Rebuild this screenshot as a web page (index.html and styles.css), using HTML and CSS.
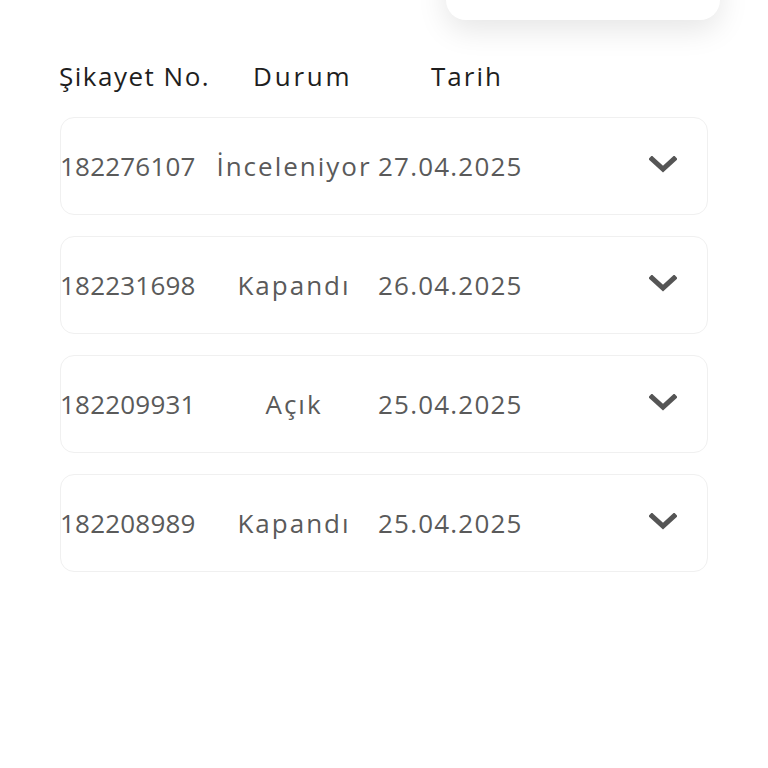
FILE: index.html
```html
<!DOCTYPE html>
<html lang="tr">
<head>
<meta charset="UTF-8">
<title>Şikayetlerim</title>
<link rel="stylesheet" href="styles.css">
</head>
<body>
<div class="top-card"></div>
<div class="list">
  <div class="list-head">
    <div class="head-no">Şikayet No.</div>
    <div class="head-status">Durum</div>
    <div class="head-date">Tarih</div>
  </div>
  <div class="complaint">
    <div class="c-no">182276107</div>
    <div class="c-status">İnceleniyor</div>
    <div class="c-date">27.04.2025</div>
    <svg class="chevron" viewBox="0 0 28 18"><path d="M3 3 L14 13 L25 3" /></svg>
  </div>
  <div class="complaint">
    <div class="c-no">182231698</div>
    <div class="c-status">Kapandı</div>
    <div class="c-date">26.04.2025</div>
    <svg class="chevron" viewBox="0 0 28 18"><path d="M3 3 L14 13 L25 3" /></svg>
  </div>
  <div class="complaint">
    <div class="c-no">182209931</div>
    <div class="c-status">Açık</div>
    <div class="c-date">25.04.2025</div>
    <svg class="chevron" viewBox="0 0 28 18"><path d="M3 3 L14 13 L25 3" /></svg>
  </div>
  <div class="complaint">
    <div class="c-no">182208989</div>
    <div class="c-status">Kapandı</div>
    <div class="c-date">25.04.2025</div>
    <svg class="chevron" viewBox="0 0 28 18"><path d="M3 3 L14 13 L25 3" /></svg>
  </div>
</div>
</body>
</html>
```

FILE: styles.css
```css
body {
  margin: 0;
  background-color: #ffffff;
  font-family: 'Open Sans', 'Liberation Sans', sans-serif;
  height: 768px;
  overflow: hidden;
  position: relative;
}
.top-card {
  position: absolute;
  top: -60px;
  left: 446px;
  width: 274px;
  height: 80px;
  background-color: #ffffff;
  border-radius: 20px;
  box-shadow: 0 10px 30px rgba(0,0,0,0.1);
}
.list {
  padding: 52px 60px 0 60px;
}
.list-head {
  display: flex;
  align-items: center;
  height: 48px;
  margin-bottom: 17px;
  font-size: 26px;
  letter-spacing: 2px;
  color: #1e1e1e;
}
.head-no {
  width: 194px;
  margin-left: -1px;
  letter-spacing: 1.5px;
}
.head-status {
  width: 178px;
  letter-spacing: 2.8px;
}
.complaint {
  display: flex;
  align-items: center;
  height: 96px;
  margin-bottom: 21px;
  border: 1px solid #f0f0f0;
  border-radius: 14px;
  font-size: 26px;
  color: #5a5a5a;
}
.c-no {
  width: 150px;
  margin-left: -1px;
  letter-spacing: 0.2px;
}
.c-status {
  width: 168px;
  text-align: center;
  letter-spacing: 2px;
}
.c-date {
  flex: 1;
  letter-spacing: 1.2px;
}
.chevron {
  width: 28px;
  height: 18px;
  margin-right: 30px;
  margin-top: -2px;
}
.chevron path {
  fill: none;
  stroke: #555555;
  stroke-width: 5;
  stroke-linecap: square;
}
```
